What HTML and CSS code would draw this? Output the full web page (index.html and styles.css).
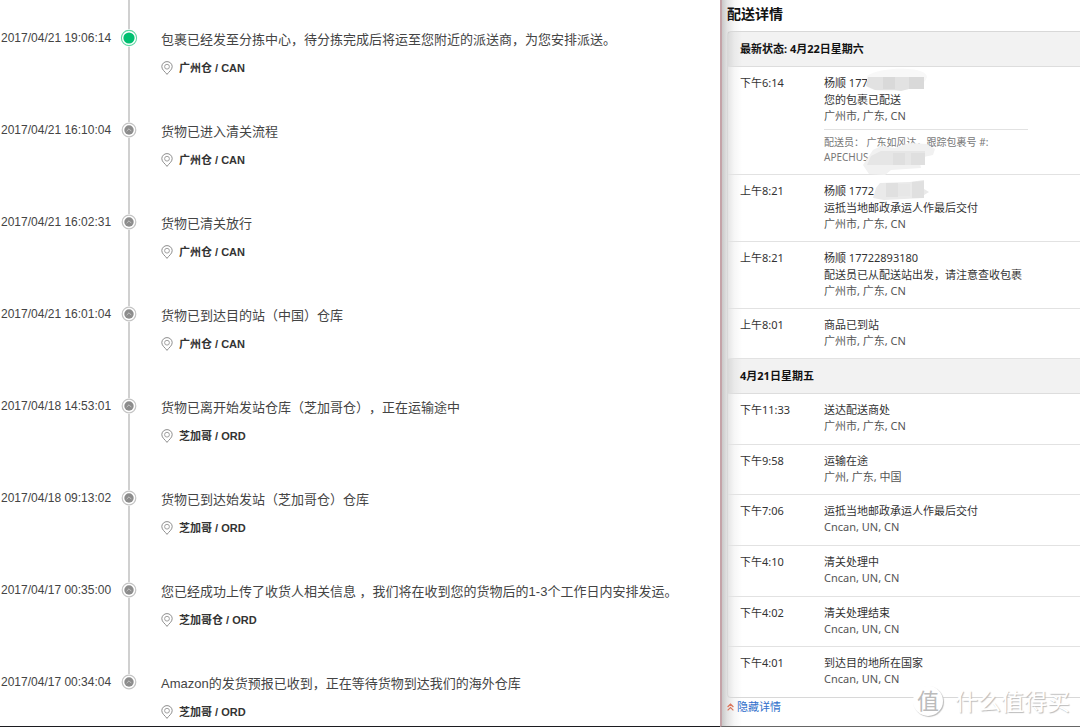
FILE: index.html
```html
<!DOCTYPE html>
<html lang="zh-CN">
<head>
<meta charset="utf-8">
<title>配送详情</title>
<link rel="stylesheet" href="styles.css">
</head>
<body>
<svg class="defs" width="0" height="0" aria-hidden="true">
  <symbol id="dot" viewBox="0 0 18 18">
    <circle cx="9" cy="9" r="8" fill="#fff"/>
    <circle cx="9" cy="9" r="6.8" fill="#fff" stroke="#c4c4c4" stroke-width="1.2"/>
    <circle cx="9" cy="9" r="4.7" fill="#8c8c8c"/>
    <path d="M6.6 10.2 9 7.8l2.4 2.4" fill="none" stroke="#c2c2c2"/>
  </symbol>
  <symbol id="dot-active" viewBox="0 0 18 18">
    <circle cx="9" cy="9" r="9" fill="#fff"/>
    <circle cx="9" cy="9" r="7.6" fill="#fff" stroke="#5fd6a3" stroke-width="1.1"/>
    <circle cx="9" cy="9" r="5.6" fill="#00bf70"/>
  </symbol>
  <symbol id="pin" viewBox="0 0 12 14">
    <path d="M6 13.4C4.300 10.800.8 8.800.8 5.700a5.200 5.100 0 0 1 10.400 0C11.200 8.800 7.700 10.800 6 13.400Z" fill="none" stroke="#8e8e8e"/>
    <circle cx="6" cy="5.700" r="2.400" fill="none" stroke="#a0a0a0"/>
  </symbol>
</svg>
<main class="page">
  <ol class="timeline">
    <li class="stop">
      <time class="stop-time">2017/04/21 19:06:14</time>
      <span class="rail"><svg class="dot"><use href="#dot-active"/></svg></span>
      <div class="stop-body"><p class="stop-text">包裹已经发至分拣中心，待分拣完成后将运至您附近的派送商，为您安排派送。</p><p class="place"><svg class="pin"><use href="#pin"/></svg>广州仓 / CAN</p></div>
    </li>
    <li class="stop">
      <time class="stop-time">2017/04/21 16:10:04</time>
      <span class="rail"><svg class="dot"><use href="#dot"/></svg></span>
      <div class="stop-body"><p class="stop-text">货物已进入清关流程</p><p class="place"><svg class="pin"><use href="#pin"/></svg>广州仓 / CAN</p></div>
    </li>
    <li class="stop">
      <time class="stop-time">2017/04/21 16:02:31</time>
      <span class="rail"><svg class="dot"><use href="#dot"/></svg></span>
      <div class="stop-body"><p class="stop-text">货物已清关放行</p><p class="place"><svg class="pin"><use href="#pin"/></svg>广州仓 / CAN</p></div>
    </li>
    <li class="stop">
      <time class="stop-time">2017/04/21 16:01:04</time>
      <span class="rail"><svg class="dot"><use href="#dot"/></svg></span>
      <div class="stop-body"><p class="stop-text">货物已到达目的站（中国）仓库</p><p class="place"><svg class="pin"><use href="#pin"/></svg>广州仓 / CAN</p></div>
    </li>
    <li class="stop">
      <time class="stop-time">2017/04/18 14:53:01</time>
      <span class="rail"><svg class="dot"><use href="#dot"/></svg></span>
      <div class="stop-body"><p class="stop-text">货物已离开始发站仓库（芝加哥仓），正在运输途中</p><p class="place"><svg class="pin"><use href="#pin"/></svg>芝加哥 / ORD</p></div>
    </li>
    <li class="stop">
      <time class="stop-time">2017/04/18 09:13:02</time>
      <span class="rail"><svg class="dot"><use href="#dot"/></svg></span>
      <div class="stop-body"><p class="stop-text">货物已到达始发站（芝加哥仓）仓库</p><p class="place"><svg class="pin"><use href="#pin"/></svg>芝加哥 / ORD</p></div>
    </li>
    <li class="stop">
      <time class="stop-time">2017/04/17 00:35:00</time>
      <span class="rail"><svg class="dot"><use href="#dot"/></svg></span>
      <div class="stop-body"><p class="stop-text">您已经成功上传了收货人相关信息 ，我们将在收到您的货物后的1-3个工作日内安排发运。</p><p class="place"><svg class="pin"><use href="#pin"/></svg>芝加哥仓 / ORD</p></div>
    </li>
    <li class="stop">
      <time class="stop-time">2017/04/17 00:34:04</time>
      <span class="rail"><svg class="dot"><use href="#dot"/></svg></span>
      <div class="stop-body"><p class="stop-text">Amazon的发货预报已收到，正在等待货物到达我们的海外仓库</p><p class="place"><svg class="pin"><use href="#pin"/></svg>芝加哥 / ORD</p></div>
    </li>
  </ol>

  <section class="details">
    <h1 class="title">配送详情</h1>
    <div class="card">
      <h2 class="day">最新状态: 4月22日星期六</h2>
      <ul class="events">
        <li class="event">
          <time class="event-time">下午6:14</time>
          <div class="event-body">
            <p>杨顺 177</p><p>您的包裹已配送</p><p class="where">广州市, 广东, CN</p>
            <div class="carrier"><p>配送员： 广东如风达，跟踪包裹号 #:</p><p>APECHUS</p></div>
            <svg class="smudge smudge-phone" viewBox="0 0 64 26" aria-hidden="true">
              <path d="M2 8C10 2 30 0 42 1c10 0 20 3 20 8-2 8-14 12-30 14C16 24 4 22 2 18Z" fill="#f8f8f8"/>
              <path d="M3 9h56v12H44l-8 2-6-1H10L1 18Z" fill="#e2e2e2"/>
              <path d="M18 9h12v12H18ZM44 9h15v12H44Z" fill="#d9d9d9"/>
            </svg>
            <svg class="smudge smudge-parcel" viewBox="0 0 76 34" aria-hidden="true">
              <path d="M12 8 20 4 34 6 48 1 66 2 74 7 72 13 58 16 60 26 30 28 24 33 8 32 2 23Z" fill="#f1f1f1"/>
              <path d="M20 9h44v14H6l4-9Z" fill="#e6e6e6"/>
              <path d="M32 11h12v12H32ZM50 11h14v12H50Z" fill="#dfdfdf"/>
            </svg>
          </div>
        </li>
        <li class="event">
          <time class="event-time">上午8:21</time>
          <div class="event-body">
            <p>杨顺 1772</p><p>运抵当地邮政承运人作最后交付</p><p class="where">广州市, 广东, CN</p>
            <svg class="smudge smudge-second" viewBox="0 0 58 22" aria-hidden="true">
              <path d="M8 3 38 2 52 0v9l5 3-5 3v3L12 20 1 18 4 8Z" fill="#eaeaea"/>
              <path d="M14 3h12v14H14ZM40 2l12-1v17H40Z" fill="#e0e0e0"/>
              <path d="M26 4h12v12H26Z" fill="#e7e7e7"/>
            </svg>
          </div>
        </li>
        <li class="event">
          <time class="event-time">上午8:21</time>
          <div class="event-body"><p>杨顺 17722893180</p><p>配送员已从配送站出发，请注意查收包裹</p><p class="where">广州市, 广东, CN</p></div>
        </li>
        <li class="event">
          <time class="event-time">上午8:01</time>
          <div class="event-body"><p>商品已到站</p><p class="where">广州市, 广东, CN</p></div>
        </li>
      </ul>
      <h2 class="day">4月21日星期五</h2>
      <ul class="events events-fill">
        <li class="event"><time class="event-time">下午11:33</time><div class="event-body"><p>送达配送商处</p><p class="where">广州市, 广东, CN</p></div></li>
        <li class="event"><time class="event-time">下午9:58</time><div class="event-body"><p>运输在途</p><p class="where">广州, 广东, 中国</p></div></li>
        <li class="event"><time class="event-time">下午7:06</time><div class="event-body"><p>运抵当地邮政承运人作最后交付</p><p class="where">Cncan, UN, CN</p></div></li>
        <li class="event"><time class="event-time">下午4:10</time><div class="event-body"><p>清关处理中</p><p class="where">Cncan, UN, CN</p></div></li>
        <li class="event"><time class="event-time">下午4:02</time><div class="event-body"><p>清关处理结束</p><p class="where">Cncan, UN, CN</p></div></li>
        <li class="event"><time class="event-time">下午4:01</time><div class="event-body"><p>到达目的地所在国家</p><p class="where">Cncan, UN, CN</p></div></li>
      </ul>
    </div>
    <a class="toggle" href="#">
      <svg class="chevrons" viewBox="0 0 7 8" aria-hidden="true"><path d="M.6 4 3.500 1.200 6.400 4M.6 7.400 3.500 4.600 6.400 7.400" fill="none" stroke="#d9745a" stroke-width="1.200"/></svg>隐藏详情
    </a>
    <div class="watermark">
      <span class="seal">值</span><span>什么值得买</span>
    </div>
  </section>
</main>
</body>
</html>
```
FILE: styles.css
```css
* { box-sizing: border-box; }

body,
h1,
h2,
p,
ol,
ul {
  margin: 0;
  padding: 0;
}

body {
  background: #fff;
  text-spacing-trim: space-all;
}

ol,
ul { list-style: none; }

.defs { position: absolute; }

.page {
  display: grid;
  grid-template-columns: 2fr 1fr;
  min-height: 100vh;
}

/* Warehouse timeline */
.timeline {
  border-bottom: 1px solid #1c1c20;
  color: #444;
  font-family: "Liberation Sans", "Noto Sans CJK SC", sans-serif;
}

.stop {
  display: grid;
  grid-template-columns: 118px 21px 1fr;
}

.stop-time {
  padding: 26px 0 0 1px;
  font-size: 12px;
  line-height: 24px;
  white-space: nowrap;
}

.rail {
  display: flex;
  justify-content: center;
  padding-top: 29px;
  background: linear-gradient(#d0d0d0, #d0d0d0) center top / 2px 100% no-repeat;
}

.stop:last-child .rail { background-size: 2px 38px; }

.dot {
  width: 18px;
  height: 18px;
}

.stop-body { padding: 28px 0 12px 22px; }

.stop:last-child .stop-body { padding-bottom: 0; }

.stop-text {
  font-size: 13px;
  line-height: 24px;
}

.place {
  display: flex;
  align-items: center;
  gap: 6px;
  margin-top: 4px;
  color: #333;
  font-size: 11px;
  font-weight: bold;
  line-height: 24px;
}

.pin {
  width: 12px;
  height: 14px;
}

/* Delivery details */
.details {
  position: relative;
  display: flex;
  flex-direction: column;
  padding: 4px 0 10px 5px;
  border-left: 2px solid #c4a3a8;
  border-bottom: 1px solid #666;
  background: linear-gradient(to right, #c9c9c9, #e2e2e2 5px, #f6f6f6 12px, #fff 20px);
  color: #333;
  font-family: "Noto Sans", "Noto Sans CJK SC", sans-serif;
  font-size: 11px;
}

.title {
  color: #111;
  font-size: 14px;
  line-height: 20px;
}

.card {
  display: flex;
  flex: 1;
  flex-direction: column;
  margin-top: 7px;
  border: 1px solid #d8d8d8;
  border-right: 0;
  border-radius: 4px 0 0 4px;
}

.day {
  padding: 0 12px;
  border-bottom: 1px solid #ddd;
  background: rgba(0, 0, 0, 0.05);
  color: #111;
  font-size: 11px;
  line-height: 34px;
}

.event {
  display: grid;
  grid-template-columns: 84px 1fr;
  padding: 7px 12px 9px;
  border-bottom: 1px solid #e2e2e2;
  line-height: 17px;
}

.events-fill {
  display: flex;
  flex: 1;
  flex-direction: column;
}

.events-fill .event { flex: 1; }

.events-fill .event:last-child { border-bottom: 0; }

.event-body { position: relative; }

.where {
  color: #555;
  line-height: 16px;
}

.carrier {
  max-width: 204px;
  margin-top: 5px;
  padding-top: 5px;
  border-top: 1px solid #e2e2e2;
  color: #777;
  font-size: 10px;
  line-height: 15px;
}

/* Redaction marks over private numbers */
.smudge { position: absolute; }

.smudge-phone {
  top: -6px;
  left: 41px;
  width: 64px;
  height: 26px;
}

.smudge-parcel {
  top: 68px;
  left: 37px;
  width: 76px;
  height: 34px;
}

.smudge-second {
  top: -2px;
  left: 48px;
  width: 58px;
  height: 22px;
}

.toggle {
  display: flex;
  align-items: center;
  align-self: flex-start;
  gap: 3px;
  color: #2f6fcb;
  line-height: 18px;
  text-decoration: none;
}

.chevrons {
  width: 7px;
  height: 8px;
}

.watermark {
  position: absolute;
  right: 10px;
  bottom: 9px;
  display: flex;
  align-items: center;
  gap: 12px;
  color: #fff;
  font-size: 23px;
  line-height: 32px;
  text-shadow: 1px 1px 1px #bbb;
}

.seal {
  width: 30px;
  height: 30px;
  border-radius: 50%;
  background: #fff;
  box-shadow: 1px 1px 1px #bbb;
  color: #bbb;
  font-size: 22px;
  line-height: 28px;
  text-align: center;
  text-shadow: none;
}
```
